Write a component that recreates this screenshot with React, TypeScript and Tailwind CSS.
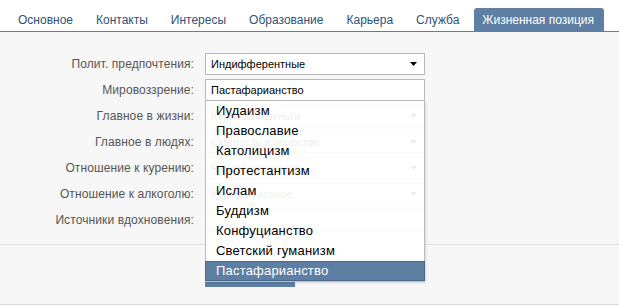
import React from "react";

const tabs = ["Основное", "Контакты", "Интересы", "Образование", "Карьера", "Служба", "Жизненная позиция"];

const rows: { label: string; value: string; arrow: boolean }[] = [
  { label: "Полит. предпочтения:", value: "Индифферентные", arrow: true },
  { label: "Мировоззрение:", value: "Пастафарианство", arrow: false },
  { label: "Главное в жизни:", value: "Карьера и деньги", arrow: true },
  { label: "Главное в людях:", value: "Смелость и упорство", arrow: true },
  { label: "Отношение к курению:", value: "Резко негативное", arrow: true },
  { label: "Отношение к алкоголю:", value: "Компромиссное", arrow: true },
  { label: "Источники вдохновения:", value: "", arrow: false },
];

const options = [
  "Иудаизм",
  "Православие",
  "Католицизм",
  "Протестантизм",
  "Ислам",
  "Буддизм",
  "Конфуцианство",
  "Светский гуманизм",
  "Пастафарианство",
];

function Arrow() {
  return (
    <svg width="8" height="5" viewBox="0 0 8 5" className="shrink-0">
      <path d="M0 0 H7 L3.5 4 Z" fill="#000" />
    </svg>
  );
}

export default function App() {
  return (
    <div className="w-[619px] h-[306px] overflow-hidden bg-[#f7f7f7] font-['Liberation_Sans',Arial,sans-serif] flex flex-col">
      <div className="h-[32px] bg-white border-b border-[#5e7fa4] flex items-end pl-[10px] gap-[7px] shrink-0">
        {tabs.map((t, i) => {
          const active = i === tabs.length - 1;
          return (
            <div
              key={t}
              className={
                active
                  ? "h-[23px] pl-[8px] pr-[10px] flex items-center text-[12px] bg-[#5e7fa4] text-white rounded-t-[3px]"
                  : "h-[23px] px-[8px] flex items-center text-[12px] text-[#2f5276]"
              }
            >
              {t}
            </div>
          );
        })}
      </div>

      <div className="flex flex-col pt-[21px] pb-[13px] gap-[4px] border-b border-[#dedede] shrink-0">
        {rows.map((r, i) => (
          <div key={r.label} className="flex items-center h-[22px]">
            <div className="w-[194px] text-right text-[12px] tracking-[0.1px] text-[#555]">{r.label}</div>
            <div className="ml-[11px] relative">
              <div className="w-[220px] h-[22px] bg-white border border-[#b9b9b9] flex items-center pl-[5px] pr-[6px] text-[11px] text-black">
                <span className="flex-1">{r.value}</span>
                {r.arrow && <Arrow />}
              </div>
              {i === 1 && (
                <div className="absolute left-0 top-[22px] w-[220px] z-10 bg-white/[0.93] border-x border-b border-[#bdbdbd] shadow-[1px_1px_2px_rgba(0,0,0,0.12)] flex flex-col">
                  {options.map((o, j) => (
                    <div
                      key={o}
                      className={
                        j === options.length - 1
                          ? "h-[20px] flex items-center pl-[10px] text-[13px] tracking-[0.2px] text-white bg-[#5e7fa4] border border-[#4a6a8c] -mx-px"
                          : "h-[20px] flex items-center pl-[10px] text-[13px] tracking-[0.2px] text-black"
                      }
                    >
                      {o}
                    </div>
                  ))}
                </div>
              )}
            </div>
          </div>
        ))}
      </div>

      <div className="flex-1 flex flex-col border-b border-[#dedede]">
        <div className="pl-[205px] pt-[17px]">
          <button className="w-[90px] h-[25px] bg-[#5e7fa4] text-white text-[11px] flex items-center justify-center">
            Сохранить
          </button>
        </div>
      </div>
      <div className="h-[1px] shrink-0" />
    </div>
  );
}
